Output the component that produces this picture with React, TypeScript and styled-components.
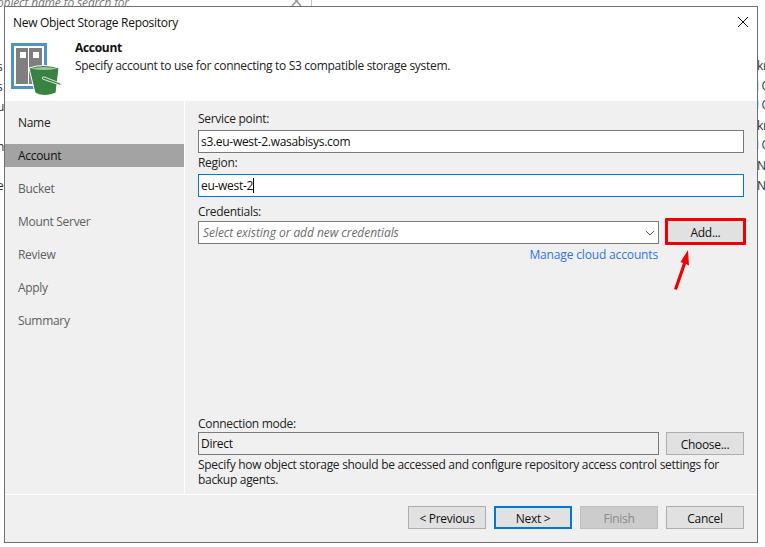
import React from "react";
import styled, { createGlobalStyle } from "styled-components";

const Global = createGlobalStyle`
  html, body { margin: 0; padding: 0; background: #fff; }
  body { width: 765px; height: 547px; overflow: hidden; font-family: "Open Sans", "Noto Sans", sans-serif; font-size: 12px; letter-spacing: -0.3px; color: #1a1a1a; }
  * { box-sizing: border-box; }
`;

const Page = styled.div`
  position: relative;
  width: 765px;
  height: 547px;
  padding: 6px 7px 4px 4px;
  overflow: hidden;
`;
const BackdropText = styled.span<{ $x: number; $y: number }>`
  position: absolute;
  left: ${(p) => p.$x}px;
  top: ${(p) => p.$y}px;
  line-height: 14px;
  color: #333;
  white-space: nowrap;
`;
const BackdropHint = styled(BackdropText)`
  font-style: italic;
  letter-spacing: -0.15px;
  color: #777;
`;
const BackdropLine = styled.div`
  position: absolute;
  left: 311px;
  top: 0;
  width: 1px;
  height: 6px;
  background: #c4c4c4;
`;
const BackdropClose = styled.svg`
  position: absolute;
  left: 291px;
  top: 0;
`;
const Dialog = styled.div`
  position: relative;
  width: 754px;
  height: 537px;
  border: 1px solid #717171;
  background: #f0f0f0;
  display: flex;
  flex-direction: column;
`;
const Header = styled.header`
  height: 94px;
  flex: none;
  background: #fff;
  display: flex;
  flex-direction: column;
`;
const TitleBar = styled.div`
  height: 31px;
  flex: none;
  display: flex;
  align-items: center;
  justify-content: space-between;
  padding: 0 8px;
  color: #111;
`;
const CloseIcon = styled.svg`
  margin-bottom: 2px;
`;
const Banner = styled.div`
  display: flex;
  padding-left: 6px;
  gap: 12px;
`;
const Logo = styled.svg`
  margin-top: 5px;
  flex: none;
`;
const BannerText = styled.div`
  padding-top: 1px;
  line-height: 17px;
  h1 { margin: 0 0 1px; font-size: 12px; font-weight: 700; line-height: 17px; color: #111; }
  p { margin: 0; color: #222; }
`;
const Middle = styled.div`
  flex: 1;
  min-height: 0;
  display: flex;
  border-bottom: 1px solid #fff;
`;
const Sidebar = styled.nav`
  width: 180px;
  flex: none;
  border-right: 1px solid #fff;
  padding-top: 10px;
  display: flex;
  flex-direction: column;
  gap: 10px;
`;
const Step = styled.div<{ $active?: boolean; $dim?: boolean }>`
  height: 23px;
  padding-left: 13px;
  display: flex;
  align-items: center;
  background: ${(p) => (p.$active ? "#a3a3a3" : "transparent")};
  color: ${(p) => (p.$active ? "#111" : p.$dim ? "#606060" : "#222")};
`;
const Form = styled.div`
  flex: 1;
  min-width: 0;
  padding: 9px 13px 7px;
  display: flex;
  flex-direction: column;
`;
const Label = styled.label<{ $top?: number; $bottom?: number }>`
  display: block;
  flex: none;
  height: 16px;
  line-height: 18px;
  margin-top: ${(p) => p.$top ?? 0}px;
  margin-bottom: ${(p) => p.$bottom ?? 4}px;
  color: #222;
`;
const Field = styled.div<{ $focus?: boolean; $readonly?: boolean }>`
  height: 23px;
  flex: 1;
  min-width: 0;
  border: 1px solid ${(p) => (p.$focus ? "#0078d7" : "#7a7a7a")};
  background: ${(p) => (p.$readonly ? "#f0f0f0" : "#fff")};
  padding: 0 2px;
  display: flex;
  align-items: center;
  color: #111;
  white-space: nowrap;
`;
const Caret = styled.span`
  width: 1px;
  height: 15px;
  background: #000;
`;
const Row = styled.div<{ $gap?: number }>`
  display: flex;
  flex: none;
  gap: ${(p) => p.$gap ?? 7}px;
  align-items: flex-start;
`;
const Placeholder = styled.span`
  font-style: italic;
  letter-spacing: -0.05px;
  color: #6d6d6d;
  flex: 1;
  padding-left: 2px;
`;
const Chevron = styled.svg`
  margin-right: 1px;
  flex: none;
`;
const Button = styled.button<{ $primary?: boolean; $disabled?: boolean }>`
  width: 78px;
  height: 23px;
  flex: none;
  padding: 1px 0 0;
  font: inherit;
  letter-spacing: inherit;
  border: ${(p) => (p.$primary ? "2px solid #0078d7" : "1px solid " + (p.$disabled ? "#bfbfbf" : "#adadad"))};
  background: ${(p) => (p.$disabled ? "#cccccc" : "#e1e1e1")};
  color: ${(p) => (p.$disabled ? "#8a8a8a" : "#111")};
`;
const HighlightedButton = styled.button`
  width: 81px;
  height: 27px;
  flex: none;
  margin: -3px -2px -1px 0;
  padding: 1px 0 0;
  font: inherit;
  letter-spacing: inherit;
  border: 3px solid #ef0000;
  border-radius: 1px;
  background: #e1e1e1;
  color: #111;
`;
const LinkRow = styled.div`
  flex: none;
  height: 16px;
  padding-right: 86px;
  margin-top: 2px;
  text-align: right;
  letter-spacing: -0.15px;
  color: #2f74e6;
  line-height: 18px;
`;
const Spacer = styled.div`
  flex: 1;
`;
const Help = styled.p`
  flex: none;
  margin: 2px 0 0;
  line-height: 15px;
  color: #222;
`;
const Footer = styled.footer`
  height: 47px;
  flex: none;
  display: flex;
  justify-content: flex-end;
  align-items: flex-start;
  gap: 8px;
  padding: 11px 13px 0 0;
`;
const Arrow = styled.svg`
  position: absolute;
  left: 670px;
  top: 248px;
`;

const steps = ["Name", "Account", "Bucket", "Mount Server", "Review", "Apply", "Summary"];
const leftFrag = [["s", 60], ["s", 80], ["u", 100], ["n", 140], ["e", 179]] as const;
const rightFrag = [
  ["kr", 757, 59], ["i C", 756, 79], ["i C", 756, 98], ["kr", 757, 119],
  ["i C", 756, 138], ["N.", 757, 159], ["N.", 757, 179],
] as const;

export default function App() {
  return (
    <Page>
      <Global />
      <BackdropHint $x={-3} $y={-4}>object name to search for</BackdropHint>
      <BackdropClose width="12" height="6" viewBox="0 0 12 6">
        <path d="M1 -4 L10 6 M10 -4 L1 6" stroke="#999" strokeWidth="1.6" />
      </BackdropClose>
      <BackdropLine />
      {leftFrag.map(([t, y], i) => <BackdropText key={i} $x={-3} $y={y}>{t}</BackdropText>)}
      {rightFrag.map(([t, x, y], i) => <BackdropText key={i} $x={x} $y={y}>{t}</BackdropText>)}
      <Dialog>
        <Header>
          <TitleBar>
            <span>New Object Storage Repository</span>
            <CloseIcon width="12" height="12" viewBox="0 0 12 12">
              <path d="M1 1 L11 11 M11 1 L1 11" stroke="#111" strokeWidth="1" />
            </CloseIcon>
          </TitleBar>
          <Banner>
            <Logo width="52" height="55" viewBox="0 0 52 55">
              <rect x="1.5" y="1.5" width="33" height="43" fill="#fff" stroke="#4d93c4" strokeWidth="3" />
              <rect x="5" y="5" width="12" height="36" fill="#7f7f7f" />
              <rect x="18" y="5" width="13" height="36" fill="#7f7f7f" />
              <rect x="9" y="9" width="6" height="6" fill="#fff" />
              <rect x="22" y="9" width="6" height="6" fill="#fff" />
              <path d="M18 25 Q33 20 48 25 L45 50 Q33 55 24 50 Z" fill="#3a8242" stroke="#fff" strokeWidth="1" />
              <path d="M19.5 25.5 Q33 28.5 46.5 25.5 Q33 22.5 19.5 25.5 Z" fill="#9cc49f" />
              <path d="M31.5 36 Q30.5 33.5 33.5 34 L50 40.5 Q51 42.5 48.5 42 Z" fill="#3a8242" stroke="#dbe9dc" strokeWidth="1" />
            </Logo>
            <BannerText>
              <h1>Account</h1>
              <p>Specify account to use for connecting to S3 compatible storage system.</p>
            </BannerText>
          </Banner>
        </Header>
        <Middle>
          <Sidebar>
            {steps.map((s, i) => <Step key={s} $active={i === 1} $dim={i > 1}>{s}</Step>)}
          </Sidebar>
          <Form>
            <Label>Service point:</Label>
            <Row><Field>s3.eu-west-2.wasabisys.com</Field></Row>
            <Label $top={1} $bottom={4}>Region:</Label>
            <Row><Field $focus>eu-west-2<Caret /></Field></Row>
            <Label $top={6} $bottom={2}>Credentials:</Label>
            <Row $gap={6}>
              <Field>
                <Placeholder>Select existing or add new credentials</Placeholder>
                <Chevron width="10" height="6" viewBox="0 0 10 6">
                  <path d="M1 1 L5 5 L9 1" stroke="#555" fill="none" />
                </Chevron>
              </Field>
              <HighlightedButton>Add...</HighlightedButton>
            </Row>
            <LinkRow>Manage cloud accounts</LinkRow>
            <Spacer />
            <Label $bottom={1}>Connection mode:</Label>
            <Row>
              <Field $readonly>Direct</Field>
              <Button>Choose...</Button>
            </Row>
            <Help>Specify how object storage should be accessed and configure repository access control settings for backup agents.</Help>
          </Form>
        </Middle>
        <Footer>
          <Button>&lt; Previous</Button>
          <Button $primary>Next &gt;</Button>
          <Button $disabled>Finish</Button>
          <Button>Cancel</Button>
        </Footer>
      </Dialog>
      <Arrow width="22" height="44" viewBox="0 0 22 44">
        <path d="M18 2 L19 17.5 L16 16 L7 42 L4 41 L13 15 L10.5 14 Z" fill="#ef0000" />
      </Arrow>
    </Page>
  );
}
